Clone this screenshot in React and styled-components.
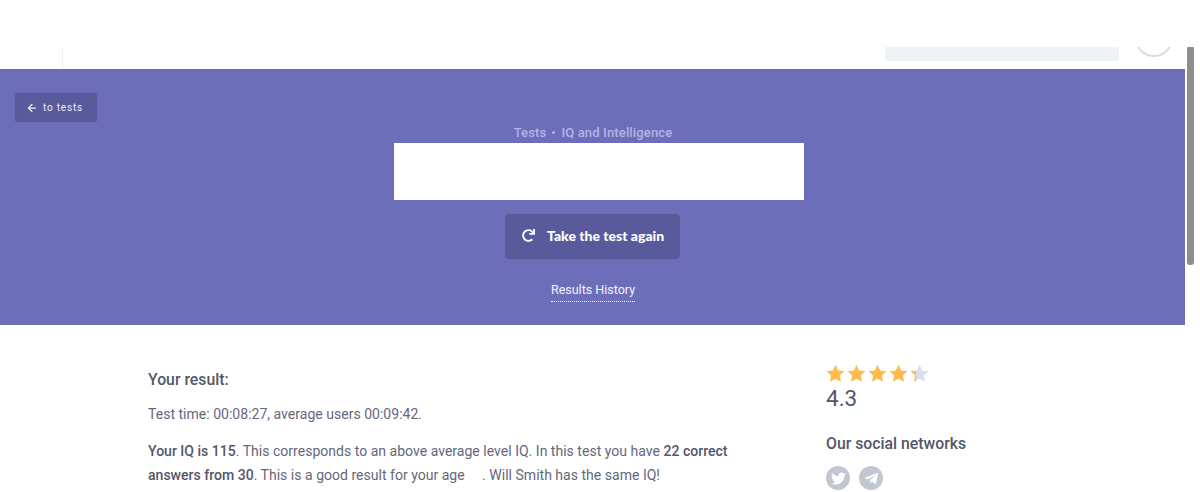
import React from 'react'
import styled, { createGlobalStyle } from 'styled-components'
import { ArrowLeft } from 'lucide-react'
import { FaTwitter, FaTelegramPlane, FaRedo } from 'react-icons/fa'

const GlobalStyle = createGlobalStyle`
  html, body {
    margin: 0;
    height: 100%;
    overflow: hidden;
    background: #fff;
  }
  body {
    font-family: Roboto, "Liberation Sans", sans-serif;
    color: #55566a;
  }
  * { box-sizing: border-box; }
`

const Shell = styled.div`
  display: flex;
  width: 1200px;
  height: 492px;
  overflow: hidden;
`
const Content = styled.div`
  width: 1185px;
  flex: none;
`
const Track = styled.div`
  flex: 1;
  padding: 47px 0 0 2px;
`
const Thumb = styled.div`
  width: 7px;
  height: 218px;
  background: #8e8e8e;
  border-radius: 1px 1px 3px 3px;
`

const Header = styled.header`
  height: 69px;
  padding-top: 47px;
  display: flex;
  align-items: flex-start;
  overflow: hidden;
`
const LogoCell = styled.div`
  width: 63px;
  height: 22px;
  border-right: 1px solid #eceef0;
`
const Search = styled.div`
  width: 234px;
  height: 14px;
  margin-left: 822px;
  background: #f0f3f6;
  border-radius: 0 0 3px 3px;
`
const Avatar = styled.svg`
  width: 38px;
  height: 10px;
  margin-left: 16px;
`

const Hero = styled.section`
  height: 256px;
  padding: 24px 15px 0;
  background: #6c6eb9;
  display: flex;
  flex-direction: column;
`
const BackButton = styled.a`
  width: 82px;
  height: 29px;
  display: flex;
  align-items: center;
  gap: 5px;
  padding-left: 11px;
  background: #585a9c;
  border-radius: 2px;
  color: #eceaf8;
  font-size: 10px;
  letter-spacing: 0.8px;
`
const Center = styled.div`
  display: flex;
  flex-direction: column;
  align-items: center;
  margin-left: 1px;
`
const Crumbs = styled.div`
  height: 21px;
  display: flex;
  align-items: center;
  gap: 6px;
  color: #b3b4e6;
  font-size: 13px;
  font-weight: 500;
  letter-spacing: 0.15px;
`
const Dot = styled.span`
  width: 3px;
  height: 3px;
  border-radius: 50%;
  background: #b3b4e6;
`
const TitleBox = styled.div`
  width: 410px;
  height: 57px;
  margin-left: 11px;
  background: #fff;
`
const AgainButton = styled.a`
  width: 175px;
  height: 45px;
  margin: 14px 1px 0 0;
  display: flex;
  align-items: center;
  gap: 12px;
  padding: 0 0 2px 17px;
  background: #585a9c;
  border-radius: 4px;
  color: #fff;
  font-family: Lato, sans-serif;
  font-size: 14px;
  font-weight: 900;
`
const HistoryLink = styled.a`
  margin-top: 23px;
  padding-bottom: 3px;
  border-bottom: 1px dotted #fff;
  color: #f2f2fb;
  font-size: 12.5px;
  line-height: 16px;
`

const Main = styled.main`
  display: flex;
  padding: 45px 0 0 148px;
`
const Article = styled.article`
  width: 678px;
  font-size: 14.05px;
`
const Heading = styled.h3`
  margin: 0;
  font-size: 15.8px;
  line-height: 19px;
  font-weight: 500;
`
const Paragraph = styled.p`
  margin: ${p => p.$top}px 0 0;
  width: 600px;
  line-height: 24px;
  color: #66677a;
  b { font-weight: 500; color: #55566a; }
`
const Aside = styled.aside`
  display: flex;
  flex-direction: column;
`
const Stars = styled.div`
  display: flex;
  gap: 2px;
  margin-top: -6px;
`
const Score = styled.div`
  font-size: 22.5px;
  line-height: 26px;
  margin-top: 2px;
`
const SideHeading = styled(Heading)`
  margin-top: 23px;
`
const Socials = styled.div`
  display: flex;
  gap: 9px;
  margin-top: 13px;
`
const Social = styled.a`
  width: 24px;
  height: 24px;
  border-radius: 50%;
  background: #c0c7d1;
  color: #fff;
  display: flex;
  align-items: center;
  justify-content: center;
  font-size: 15px;
`

const STAR = 'M9.5 0.8l2.7 5.7 6.2 .8-4.5 4.3 1.1 6.2-5.5-3-5.5 3 1.1-6.2L.6 7.3l6.2-.8z'

const Star = ({ fill }) => {
  const id = `star-${Math.round(fill * 100)}`
  return (
    <svg width="19" height="19" viewBox="0 0 19 19">
      <defs>
        <linearGradient id={id}>
          <stop offset={fill} stopColor="#fdbc4b" />
          <stop offset={fill} stopColor="#d9dfe8" />
        </linearGradient>
      </defs>
      <path d={STAR} fill={`url(#${id})`} />
    </svg>
  )
}

export default function App() {
  return (
    <Shell>
      <GlobalStyle />
      <Content>
        <Header>
          <LogoCell />
          <Search />
          <Avatar viewBox="0 28 38 10">
            <circle cx="19" cy="19" r="18" fill="none" stroke="#d9dce1" strokeWidth="2" />
          </Avatar>
        </Header>
        <Hero>
          <BackButton>
            <ArrowLeft size={12} strokeWidth={2.5} />
            to tests
          </BackButton>
          <Center>
            <Crumbs>
              <span>Tests</span>
              <Dot />
              <span>IQ and Intelligence</span>
            </Crumbs>
            <TitleBox />
            <AgainButton>
              <FaRedo size={13} />
              Take the test again
            </AgainButton>
            <HistoryLink>Results History</HistoryLink>
          </Center>
        </Hero>
        <Main>
          <Article>
            <Heading>Your result:</Heading>
            <Paragraph $top={13}>Test time: 00:08:27, average users 00:09:42.</Paragraph>
            <Paragraph $top={13}>
              <b>Your IQ is 115</b>. This corresponds to an above average level IQ. In this test you have <b>22 correct answers from 30</b>. This is a good result for your age &nbsp;&nbsp;&nbsp;&nbsp;. Will Smith has the same IQ!
            </Paragraph>
          </Article>
          <Aside>
            <Stars>
              {[1, 1, 1, 1, 0.3].map((f, i) => <Star key={i} fill={f} />)}
            </Stars>
            <Score>4.3</Score>
            <SideHeading>Our social networks</SideHeading>
            <Socials>
              <Social><FaTwitter /></Social>
              <Social><FaTelegramPlane /></Social>
            </Socials>
          </Aside>
        </Main>
      </Content>
      <Track>
        <Thumb />
      </Track>
    </Shell>
  )
}
